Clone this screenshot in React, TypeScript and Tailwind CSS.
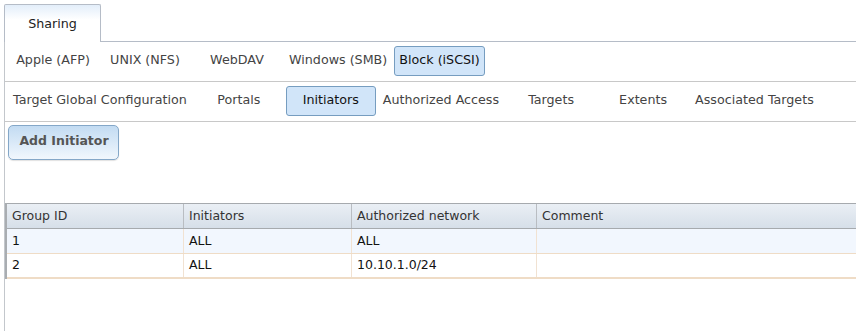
const sub1 = ['Apple (AFP)', 'UNIX (NFS)', 'WebDAV', 'Windows (SMB)', 'Block (iSCSI)'];
const sub2 = [
  'Target Global Configuration',
  'Portals',
  'Initiators',
  'Authorized Access',
  'Targets',
  'Extents',
  'Associated Targets',
];

const cols = [
  { label: 'Group ID', w: 'w-[177px]' },
  { label: 'Initiators', w: 'w-[168px]' },
  { label: 'Authorized network', w: 'w-[185px]' },
  { label: 'Comment', w: 'w-[360px]' },
];

const rows = [
  ['1', 'ALL', 'ALL', ''],
  ['2', 'ALL', '10.10.1.0/24', ''],
];

function TabButton({ label, active }: { label: string; active?: boolean }) {
  return (
    <div
      className={
        active
          ? 'flex h-[30px] min-w-[90px] items-center justify-center rounded-[3px] border border-[#769dc0] bg-[#d1e5f9] px-[4px] pb-[2px] text-[#111]'
          : 'flex h-[30px] min-w-[90px] items-center justify-center rounded-[3px] border border-transparent px-[4px] pb-[2px] text-[#444]'
      }
    >
      {label}
    </div>
  );
}

export default function App() {
  return (
    <div
      className="h-[331px] w-[856px] overflow-hidden bg-white text-[12.7px] leading-none"
      style={{ fontFamily: '"DejaVu Sans", "Liberation Sans", sans-serif' }}
    >
      {/* top tab strip */}
      <div className="flex h-[42px] items-end">
        <div className="ml-[4px] flex h-[38px] w-[97px] items-center justify-center rounded-t-[2px] border border-b-0 border-[#b5bcc7] bg-linear-to-b from-[#e3eefa] to-white to-40% pt-[1px] text-[#222]">
          Sharing
        </div>
        <div className="flex-1 border-b border-[#b5bcc7]" />
      </div>

      <div className="ml-[4px] h-full border-l border-[#c3c7cc]">
        {/* protocol tabs */}
        <div className="flex h-[40px] gap-[2px] border-b border-[#c8c8c8] pl-[3px] pt-[4px]">
          {sub1.map((t) => (
            <TabButton key={t} label={t} active={t === 'Block (iSCSI)'} />
          ))}
        </div>

        {/* iSCSI tabs */}
        <div className="flex h-[40px] gap-[2px] border-b border-[#c8c8c8] pl-[3px] pt-[4px]">
          {sub2.map((t) => (
            <TabButton key={t} label={t} active={t === 'Initiators'} />
          ))}
        </div>

        <div className="pl-[3px] pt-[3px]">
          <button className="flex h-[35px] w-[111px] items-center justify-center rounded-[5px] border border-[#84a7c8] bg-linear-to-b from-[#c2dbf2] to-[#f1f7fd] pb-[2px] pl-[1px] text-[12.5px] font-bold text-[#555] shadow-[0_1px_1px_rgba(0,0,0,0.12)]">
            Add Initiator
          </button>
        </div>

        {/* table */}
        <div className="mt-[43px] w-[900px] border-l-2 border-[#a9adb1] text-[12.5px]">
          <div className="flex h-[26px] border-y border-[#a6aaae] bg-linear-to-b from-[#eaeff5] to-[#d6dfe9] text-[#333]">
            {cols.map((c, i) => (
              <div
                key={c.label}
                className={`flex items-center pl-[5px] ${c.w} ${i < cols.length - 1 ? 'border-r border-[#b9bdc2]' : ''}`}
              >
                {c.label}
              </div>
            ))}
          </div>
          {rows.map((r, ri) => (
            <div
              key={ri}
              className={
                ri === 0
                  ? 'flex h-[25px] border-b border-[#efdcc6] bg-[#f2f7fe] text-[#111]'
                  : 'flex h-[25px] border-b-2 border-[#efdcc6] bg-white text-[#111]'
              }
            >
              {r.map((v, i) => (
                <div
                  key={i}
                  className={`flex items-center pl-[5px] ${cols[i].w} ${i < r.length - 1 ? 'border-r border-[#f1e2d2]' : ''}`}
                >
                  {v}
                </div>
              ))}
            </div>
          ))}
        </div>
      </div>
    </div>
  );
}
